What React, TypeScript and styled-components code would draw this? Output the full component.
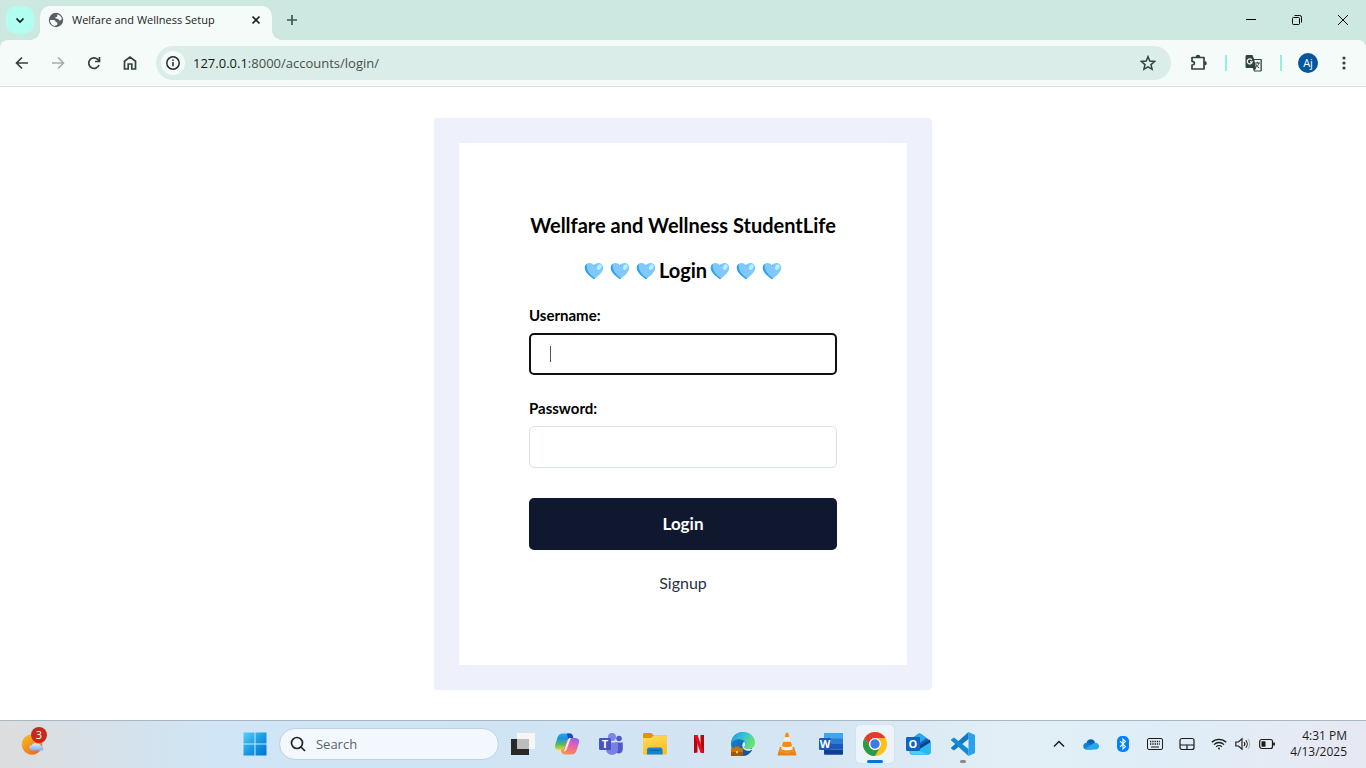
import React from "react";
import styled, { createGlobalStyle, css } from "styled-components";

const ui = `"Open Sans", "Noto Sans", sans-serif`;
const brand = `Lato, "Open Sans", sans-serif`;

const GlobalStyle = createGlobalStyle`
  *, *::before, *::after { box-sizing: border-box; }
  body { margin: 0; background: #fff; font-family: ${ui}; color: #000; }
  button, input { font: inherit; color: inherit; }
  button { border: 0; padding: 0; background: none; cursor: pointer; }
  svg { display: block; flex: none; }
`;

const Screen = styled.div`
  display: flex;
  flex-direction: column;
  min-height: 100vh;
`;

/* Browser frame */
const TabStrip = styled.div`
  display: flex;
  align-items: center;
  height: 40px;
  padding-left: 6px;
  background: #cce8e1;
`;

const TabSearch = styled.button`
  display: grid;
  place-items: center;
  width: 28px;
  height: 28px;
  margin-right: 6px;
  border-radius: 10px;
  background: #b2fff1;
`;

const Tab = styled.div`
  position: relative;
  display: flex;
  align-items: center;
  align-self: flex-end;
  width: 232px;
  height: 34px;
  padding: 0 8px 6px 8px;
  border-radius: 10px 10px 0 0;
  background: #f5fbf9;

  &::before,
  &::after {
    content: "";
    position: absolute;
    bottom: 0;
    width: 10px;
    height: 10px;
  }
  &::before {
    right: 100%;
    background: radial-gradient(circle at 0 0, transparent 10px, #f5fbf9 10px);
  }
  &::after {
    left: 100%;
    background: radial-gradient(circle at 100% 0, transparent 10px, #f5fbf9 10px);
  }
`;

const TabTitle = styled.span`
  flex: 1;
  margin-left: 8px;
  font-size: 11px;
  line-height: 16px;
  color: #1c2321;
  white-space: nowrap;
`;

const TabClose = styled.button`
  display: grid;
  place-items: center;
  width: 16px;
  height: 16px;
`;

const NewTab = styled.button`
  display: grid;
  place-items: center;
  width: 28px;
  height: 28px;
  margin-left: 6px;
`;

const WindowControls = styled.div`
  display: flex;
  margin-left: auto;
`;

const WindowButton = styled.button`
  display: grid;
  place-items: center;
  width: 46px;
  height: 40px;
`;

const ToolbarBack = styled.div`
  background: #cce8e1;
`;

const Toolbar = styled.div`
  display: flex;
  align-items: center;
  height: 47px;
  padding: 0 4px;
  border-bottom: 1px solid #d3e2de;
  border-radius: 8px 8px 0 0;
  background: #f5fbf9;
`;

const ToolButton = styled.button`
  display: grid;
  place-items: center;
  width: 36px;
  height: 34px;
`;

const AddressBar = styled.div`
  display: flex;
  align-items: center;
  flex: 1;
  height: 34px;
  margin: 0 9px 0 8px;
  padding: 0 15px 0 5px;
  border-radius: 17px;
  background: #daede8;
`;

const SiteInfo = styled.button`
  display: grid;
  place-items: center;
  width: 24px;
  height: 24px;
  margin-right: 8px;
  border-radius: 12px;
  background: #f5fbf9;
`;

const Address = styled.div`
  flex: 1;
  font-size: 13px;
  line-height: 20px;
  color: #47504d;
`;

const Host = styled.span`
  color: #141a18;
`;

const Divider = styled.span`
  width: 2px;
  height: 16px;
  margin: 0 8px 0 9px;
  background: #94f0e2;
`;

const Avatar = styled.span`
  display: grid;
  place-items: center;
  width: 20px;
  height: 20px;
  border-radius: 10px;
  background: #0257a0;
  color: #fff;
  font-size: 11px;
  line-height: 16px;
`;

/* Login page */
const Page = styled.main`
  display: flex;
  flex: 1;
  align-items: center;
  justify-content: center;
  padding: 24px;
  font-family: ${brand};
`;

const CardFrame = styled.div`
  width: 100%;
  max-width: 498px;
  padding: 25px;
  border-radius: 4px;
  background: #eef1fb;
`;

const Card = styled.form`
  display: flex;
  flex-direction: column;
  padding: 70px;
  background: #fff;
`;

const Heading = styled.h3`
  display: flex;
  align-items: center;
  justify-content: center;
  gap: 3px;
  margin: 0 0 20px;
  font-size: 20px;
  font-weight: 700;
  line-height: 25px;
  white-space: nowrap;
`;

const Hearts = styled.span`
  display: flex;
  gap: 6px;
`;

const Field = styled.div`
  position: relative;
  display: flex;
  flex-direction: column;
  gap: 8px;
  margin: 2px 0 21px;
`;

const Label = styled.label`
  font-size: 15px;
  font-weight: 700;
  line-height: 20px;
`;

const Input = styled.input<{ $active?: boolean }>`
  width: 100%;
  height: 42px;
  padding: 0 20px;
  border: 1px solid #d8dff3;
  border-radius: 5px;
  outline: none;
  background: #fff;
  caret-color: transparent;
  ${(p) => p.$active && css`border: 2px solid #101010;`}
`;

const Caret = styled.span`
  position: absolute;
  left: 21px;
  bottom: 13px;
  width: 1px;
  height: 16px;
  background: #4a5578;
`;

const Submit = styled.button`
  height: 52px;
  margin-top: 9px;
  border-radius: 5px;
  background: #10182f;
  color: #fff;
  font-size: 17px;
  font-weight: 700;
  line-height: 24px;
`;

const SignupLink = styled.a`
  align-self: center;
  margin-top: 20px;
  font-size: 16px;
  line-height: 25px;
  color: #2a3047;
  text-decoration: none;
`;

/* Taskbar */
const Taskbar = styled.footer`
  display: flex;
  align-items: center;
  height: 48px;
  padding: 0 19px 1px 11px;
  border-top: 1px solid #aab7c2;
  background: linear-gradient(90deg, #dcdddd 0, #d9dfe3 4%, #d0e5f5 15%, #cfe4f4 35%, #d5e5f3 60%, #e2eff6 74%, #deedf7 85%, #e5ebf5 94%, #e6e8f2 100%);
`;

const Spacer = styled.div<{ $grow: number }>`
  flex: ${(p) => p.$grow} 1 0;
`;

const AppButton = styled.button<{ $open?: boolean }>`
  position: relative;
  display: grid;
  place-items: center;
  width: 44px;
  height: 46px;
  ${(p) => p.$open && css`
    &::before {
      content: "";
      position: absolute;
      inset: 4px 3px;
      border-radius: 4px;
      background: #edf3fa;
      box-shadow: 0 0 1px #b3c3d0;
    }
  `}
  svg { position: relative; }
`;

const Running = styled.span<{ $focused?: boolean }>`
  position: absolute;
  bottom: 4px;
  width: ${(p) => (p.$focused ? 16 : 6)}px;
  height: 3px;
  border-radius: 2px;
  background: ${(p) => (p.$focused ? "#0078d4" : "#858a8f")};
`;

const Count = styled.span`
  position: absolute;
  top: 6px;
  right: 8px;
  width: 16px;
  height: 16px;
  border-radius: 8px;
  background: #c42b1c;
  color: #fff;
  font-size: 11px;
  line-height: 16px;
  text-align: center;
`;

const SearchBox = styled.label`
  display: flex;
  align-items: center;
  gap: 10px;
  width: 220px;
  height: 32px;
  margin: 0 2px;
  padding: 0 10px;
  border: 1px solid #bdd1e1;
  border-radius: 16px;
  background: #f2f8fd;
`;

const SearchInput = styled.input`
  flex: 1;
  min-width: 0;
  padding: 0;
  border: 0;
  outline: none;
  background: transparent;
  font-size: 13px;
  line-height: 20px;
  &::placeholder { color: #5d6266; opacity: 1; }
`;

const TrayButton = styled.button<{ $narrow?: boolean }>`
  display: grid;
  place-items: center;
  width: ${(p) => (p.$narrow ? 24 : 32)}px;
  height: 40px;
`;

const TrayGroup = styled.div`
  display: flex;
  margin-left: 4px;
`;

const Clock = styled.time`
  width: 68px;
  color: #1b1b1b;
  font-size: 12px;
  line-height: 16px;
  text-align: right;
  white-space: nowrap;
`;

type IconProps = { size?: number; color?: string; width?: number; children: React.ReactNode };
const Line = ({ size = 16, color = "#30443f", width = 1.7, children }: IconProps) => (
  <svg width={size} height={size} viewBox={`0 0 ${size} ${size}`} fill="none" stroke={color} strokeWidth={width}>
    {children}
  </svg>
);

const Heart = () => (
  <svg width="20" height="20" viewBox="0 -2 20 20">
    <path d="M10 17.3C7.3 15.1.8 11 .8 5.8.8 1 6.8-.7 10 3.2 13.2-.7 19.2 1 19.2 5.8c0 5.200-6.500 9.300-9.200 11.500Z" fill="#82c8ff" />
    <path d="M10 17.300C7.300 15.100.8 11 .8 5.800.8 4 1.600 2.600 2.800 1.700 1.900 8.500 6.300 13 11.300 16.300L10 17.300Z" fill="#2aa5ee" />
    <path d="M10 3.200 11 2.200 10.600 4.500Z" fill="#2aa5ee" />
    <ellipse cx="15.300" cy="5.100" rx="2" ry="3" transform="rotate(28 15.300 5.100)" fill="#b2f3ff" />
  </svg>
);

const Globe = () => (
  <svg width="16" height="16" viewBox="0 0 16 16">
    <circle cx="8" cy="8" r="7.200" fill="#5a5f63" />
    <path d="M2 8h3.500c1.500 0 2.300 1 2.300 2.300h1.500v2.200c-1.300 1.500-2.600 1.500-3.300 1.300C3.500 13 2 10.700 2 8Z" fill="#f5fbf9" />
    <path d="M9.500 2.200c2.200.6 3.700 2.200 4.300 4.300-.4 1.700-1.300 2.300-2.500 1.700-.6-.8-1.200-1.500-2.300-1.500-1.500 0-1.800-.8-1.500-1.700h1.500l.5-2.800Z" fill="#f5fbf9" />
  </svg>
);

const Translate = () => (
  <svg width="17" height="17" viewBox="0 0 17 17">
    <path d="M2 0h5.500L9 4h6.500c.8 0 1.300.5 1.300 1.300v9.900c0 .8-.5 1.300-1.300 1.300H9L7.800 13H2C1 13 .5 12.500.5 11.500v-10C.5.500 1 0 2 0Z" fill="#30443f" />
    <path d="M9.300 5h6.200v10.500H9.600l1.500-2.300Z" fill="#f5fbf9" />
    <path d="M6.800 5A2.500 2.500 0 1 0 7.200 6.900H5" fill="none" stroke="#f5fbf9" strokeWidth="1.200" />
    <path d="M9.800 8h5.200M12.300 6.800V8m1.600 0c-.5 2.200-1.800 3.700-3.300 4.700m.3-3.500c.7 1.500 1.900 3 3.300 3.900" fill="none" stroke="#30443f" strokeWidth="1" />
  </svg>
);

const Weather = () => (
  <svg width="26" height="26" viewBox="0 0 26 26">
    <defs>
      <linearGradient id="sun" x2="0.700" y2="1"><stop stopColor="#f8c12c" /><stop offset="1" stopColor="#ef6c13" /></linearGradient>
      <linearGradient id="cloud" x2="0" y2="1"><stop stopColor="#e1edff" /><stop offset="1" stopColor="#86aae8" /></linearGradient>
    </defs>
    <circle cx="12" cy="13.500" r="10.300" fill="url(#sun)" />
    <path d="M12 19.500a2.600 2.600 0 0 1-.3-5.200c.7-2.300 4-3.300 6.100-1.400 1.800-.3 3.200.8 3.200 2 3 .3 3 4.600.3 4.600Z" fill="url(#cloud)" />
  </svg>
);

const Windows = () => (
  <svg width="24" height="24" viewBox="0 0 24 24">
    <defs><linearGradient id="win" x2="1" y2="1" gradientUnits="userSpaceOnUse" gradientTransform="scale(23)"><stop stopColor="#5bd0fc" /><stop offset="0.550" stopColor="#169ae3" /><stop offset="1" stopColor="#0075d0" /></linearGradient></defs>
    <path d="M.5.500h11v11H.5ZM12.500.500h11v11h-11ZM.5 12.500h11v11H.5ZM12.500 12.500h11v11h-11Z" fill="url(#win)" />
  </svg>
);

const TaskView = () => (
  <svg width="24" height="24" viewBox="0 0 24 24">
    <path d="M0 7h18v16H0Z" fill="#292929" />
    <path d="M6 1h18v16H6Z" fill="#f6f6f6" />
    <path d="M6 7h12v10H6Z" fill="#bcbdbd" />
  </svg>
);

const Copilot = () => (
  <svg width="24" height="22" viewBox="0 0 24 22">
    <defs>
      <linearGradient id="cpa" x1="0.400" y1="0" x2="0.400" y2="1"><stop stopColor="#21a9f5" /><stop offset=".3" stopColor="#1b94dd" /><stop offset=".65" stopColor="#55b866" /><stop offset="1" stopColor="#f0dc20" /></linearGradient>
      <linearGradient id="cpb" x1="0.700" y1="0" x2="0.300" y2="1"><stop stopColor="#9c5cf0" /><stop offset=".5" stopColor="#f2669a" /><stop offset="1" stopColor="#fb9250" /></linearGradient>
    </defs>
    <path d="M7 5h13c3.800 0 4.700 2.300 3.700 5.500l-2 6.500c-1 3.300-2.600 4.500-5.200 4.500H9.400c-2 0-2.600-1.200-3.200-3.500L5.500 15Z" fill="url(#cpb)" />
    <path d="M7.500.5h8.100c-2.300 1-2.700 3.300-3.500 6L9.700 14c-.8 2.300-2 3-3.700 3H4.500C.5 17-.7 14.700.3 11.500l2-6.500C3.300 1.700 4.900.5 7.500.5Z" fill="url(#cpa)" />
    <path d="M12 .5h3.200c1.700 0 2.500.9 3.200 4.500h-2.200c-1.800 0-2.600.6-3.200 2.500Z" fill="#1d49c0" />
    <path d="M13 6.500 9.500 16.500c-.3.900-.9 1.500-1.600 2 2.300 0 3.400-.8 3.900-2.400L15 7c.3-1 .8-1.500 1.500-2-1.800 0-3 .3-3.500 1.500Z" fill="#edf3fc" />
  </svg>
);

const Badge = ({ x, y, s, fill, letter }: { x: number; y: number; s: number; fill: string; letter: string }) => (
  <>
    <rect x={x} y={y} width={s} height={s} rx="1.300" fill={fill} />
    <text x={x + s / 2} y={y + s / 2 + 4} textAnchor="middle" fill="#fff" fontFamily="Open Sans" fontWeight="700" fontSize="11">{letter}</text>
  </>
);

const Teams = () => (
  <svg width="26" height="24" viewBox="0 0 26 24">
    <circle cx="21" cy="6.500" r="2.800" fill="#5059c9" />
    <path d="M17 10.500h7.800v6.300c0 6-6.800 6-7.800 2Z" fill="#4f59cb" />
    <circle cx="14" cy="5" r="4" fill="#7c85ea" />
    <path d="M8 10.500h12v6.300c0 8-12 8-12 0Z" fill="#7780e4" />
    <Badge x={1} y={6} s={12} fill="#4b53bc" letter="T" />
  </svg>
);

const Folder = () => (
  <svg width="24" height="24" viewBox="0 0 24 24">
    <defs><linearGradient id="fold" y2="1" x2=".3"><stop stopColor="#ffdc67" /><stop offset="1" stopColor="#ffbf18" /></linearGradient></defs>
    <path d="M0 2.500C0 1.500.5 1 1.500 1H8l3 2.300h11.500c1 0 1.500.5 1.500 1.500v5H0Z" fill="#dd9800" />
    <path d="M0 6h8l3-2.700h11.500c1 0 1.500.5 1.500 1.500v16.500c0 .8-.5 1.200-1.200 1.200H1.200C.5 22.500 0 22 0 21.300Z" fill="url(#fold)" />
    <path d="M4 22.500V18c0-1.500.8-2.500 2.300-2.500h11c1.500 0 2.300 1 2.300 2.500v4.500Z" fill="#1284d7" />
    <path d="M7 18.300h10" stroke="#075ca6" />
  </svg>
);

const Netflix = () => (
  <svg width="10" height="18" viewBox="0 0 10 18">
    <path d="M0 0h3.500v17.500L0 18ZM6.500 0H10v18l-3.500-.5Z" fill="#b40610" />
    <path d="M0 0h3.500L10 18l-3.500-.5Z" fill="#e80c18" />
  </svg>
);

const Edge = () => (
  <svg width="26" height="26" viewBox="0 0 26 26">
    <defs>
      <linearGradient id="edg" x2="1" y2=".4"><stop stopColor="#1f9be6" /><stop offset=".5" stopColor="#33bfdc" /><stop offset="1" stopColor="#67e36f" /></linearGradient>
      <linearGradient id="edb" x2="1" y2="1"><stop stopColor="#1b8fd8" /><stop offset="1" stopColor="#0b4a90" /></linearGradient>
    </defs>
    <path d="M1 13C1 6 6 1 13 1s9 9 9 18.500c-2.200 3.500-5.500 5.500-9 5.500C6 25 1 20 1 13Z" fill="url(#edb)" />
    <path d="M1 12C2 5 7 1 13 1c7 0 12 4.700 12 10.500 0 4-2.700 6.500-6.500 6.500-2.500 0-4.300-.8-4.300-2 1.700-1.800 1.700-4.200 0-5.900C10.500 7 4 7.500 1 12Z" fill="url(#edg)" />
    <path d="M14.200 10.500c-3 2-2.500 7.500 2 9 2.800.9 5.300 0 7.300-2.300-1.300.6-3.200 1-5 .8-2.500 0-4.300-.8-4.300-2 1.500-1.600 1.700-3.700 0-5.500Z" fill="#dcecf7" />
    <path d="M4.500 17v-1.500h5V17H13v8H1v-8Z" fill="#c9730d" />
    <path d="M1 21h12v4H1Z" fill="#a35405" />
    <path d="M6 20h2v2.200H6Z" fill="#ffd153" />
  </svg>
);

const Vlc = () => (
  <svg width="22" height="24" viewBox="0 0 22 24">
    <path d="m4 15-2.300 7.200c-.3.800.1 1.300.8 1.300h17c.7 0 1.100-.5.800-1.300L18 15Z" fill="#ed8112" />
    <path d="M10 .8h2L17.500 19c-2 1.800-11 1.800-13 0Z" fill="#f0f0ee" />
    <path d="m8.700 4.800 1.200-4h2.200l1.200 4c-1.200.6-3.500.6-4.600 0ZM7.200 9.700h7.600l1.300 4.400c-2.200 1.300-8 1.300-10.200 0ZM4.500 19l.6-2c2.500 1.800 9.300 1.800 11.800 0l.6 2c-2.500 2-10.500 2-13 0Z" fill="#f48b14" />
  </svg>
);

const Word = () => (
  <svg width="24" height="24" viewBox="0 0 24 24">
    <path d="M5 1h19v6H5Z" fill="#41a5ee" /><path d="M5 6.500h19V12H5Z" fill="#2b7cd3" />
    <path d="M5 12h19v5.500H5Z" fill="#185abd" /><path d="M5 17.500h19V22a.8.8 0 0 1-.8.800H5.800A.8.800 0 0 1 5 22Z" fill="#103f91" />
    <Badge x={0} y={6} s={12} fill="#185abd" letter="W" />
  </svg>
);

const Chrome = () => (
  <svg width="24" height="24" viewBox="0 0 24 24">
    <circle cx="12" cy="12" r="12" fill="#fbc116" />
    <path d="M1.600 6A12 12 0 0 1 22.400 6H12a6 6 0 0 0-5.200 9Z" fill="#e33b2e" />
    <path d="M1.600 6A12 12 0 0 0 12 24l5.200-9A6 6 0 0 1 6.800 15Z" fill="#269d4b" />
    <circle cx="12" cy="12" r="6" fill="#fff" /><circle cx="12" cy="12" r="4.700" fill="#397be9" />
  </svg>
);

const Outlook = () => (
  <svg width="25" height="24" viewBox="0 0 25 24">
    <path d="m4 8 8-6c1-.7 1.900-.7 3 0l9.500 7v11c0 1.700-.8 2.500-2.500 2.500H6c-1.500 0-2.300-.8-2.300-2.500Z" fill="#0c62c3" />
    <path d="m6 6.500 6-4.600c1-.7 1.900-.7 3 0l5.500 4.100L11 13Z" fill="#2ba8ec" /><path d="m13 14 11-6.500v6L14 20Z" fill="#123e87" />
    <path d="m5 22.300 19.500-12V20c0 1.700-.8 2.500-2.500 2.500H6Z" fill="#27b9ef" />
    <path d="M4 15v5c0 1.700.8 2.500 2.500 2.500H22Z" fill="#47cef4" />
    <Badge x={0} y={5} s={14} fill="#0f65bd" letter="O" />
  </svg>
);

const VsCode = () => (
  <svg width="24" height="24" viewBox="0 0 24 24">
    <path d="M17.500 0 24 3v18l-6.500 3Z" fill="#27a3ed" />
    <path d="M17.500 0v7L3 18.500.3 16.700c-.4-.4-.4-.9 0-1.300L17.500 0Z" fill="#1678bd" />
    <path d="M17.500 24v-7L3 5.500.3 7.300c-.4.400-.4.900 0 1.300L17.500 24Z" fill="#1489d4" />
  </svg>
);

const apps = [
  { name: "Task view", icon: <TaskView /> },
  { name: "Copilot", icon: <Copilot /> },
  { name: "Teams", icon: <Teams /> },
  { name: "File Explorer", icon: <Folder /> },
  { name: "Netflix", icon: <Netflix /> },
  { name: "Edge", icon: <Edge /> },
  { name: "VLC", icon: <Vlc /> },
  { name: "Word", icon: <Word /> },
  { name: "Chrome", icon: <Chrome />, state: "focused" },
  { name: "Outlook", icon: <Outlook /> },
  { name: "Visual Studio Code", icon: <VsCode />, state: "running" },
];

const HeartRow = () => (
  <Hearts aria-hidden="true"><Heart /><Heart /><Heart /></Hearts>
);

export default function App() {
  return (
    <Screen>
      <GlobalStyle />
      <header>
        <TabStrip>
          <TabSearch aria-label="Search tabs"><Line size={10} color="#0c1412"><path d="m1.500 3.500 3.500 3.500 3.500-3.500" /></Line></TabSearch>
          <Tab>
            <Globe />
            <TabTitle>Welfare and Wellness Setup</TabTitle>
            <TabClose aria-label="Close tab"><Line size={10} color="#1c2321"><path d="m1.500 1.500 7 7M8.500 1.500l-7 7" /></Line></TabClose>
          </Tab>
          <NewTab aria-label="New tab"><Line size={12} color="#3d5650"><path d="M6 1v10M1 6h10" /></Line></NewTab>
          <WindowControls>
            <WindowButton aria-label="Minimize"><Line size={10} color="#000" width={1}><path d="M0 4.500h10" /></Line></WindowButton>
            <WindowButton aria-label="Restore"><Line size={10} color="#000" width={1}><rect x="0.500" y="2.500" width="7" height="7" rx="1" /><path d="M2.500.500h5.200a1.800 1.800 0 0 1 1.800 1.800v5.200" /></Line></WindowButton>
            <WindowButton aria-label="Close window"><Line size={10} color="#000" width={1}><path d="m0 0 10 10M10 0 0 10" /></Line></WindowButton>
          </WindowControls>
        </TabStrip>
        <ToolbarBack>
          <Toolbar>
            <ToolButton aria-label="Back"><Line><path d="M14 8H3M8 2.500 2.500 8 8 13.500" /></Line></ToolButton>
            <ToolButton aria-label="Forward"><Line color="#a5aeab"><path d="M2 8h11M8 2.500 13.500 8 8 13.500" /></Line></ToolButton>
            <ToolButton aria-label="Reload"><Line><path d="M13 10a5.300 5.300 0 1 1-1.300-5.700L13.500 6M13.500 2v4.500H9" /></Line></ToolButton>
            <ToolButton aria-label="Home"><Line><path d="M2.500 6.200 8 2l5.500 4.200V14h-3.700V9H6.200v5H2.500Z" /></Line></ToolButton>
            <AddressBar>
              <SiteInfo aria-label="Site information"><Line color="#202b28" width={1.5}><circle cx="8" cy="8" r="6.200" /><path d="M8 7v4.300M8 4.500v1.500" /></Line></SiteInfo>
              <Address><Host>127.0.0.1</Host>:8000/accounts/login/</Address>
              <TabClose aria-label="Bookmark"><Line color="#30443f" width={1.5}><path d="m8 1.700 1.800 4.400 4.800.4-3.600 3.100 1.100 4.700L8 11.800l-4.100 2.500L5 9.600 1.400 6.500l4.800-.4Z" /></Line></TabClose>
            </AddressBar>
            <ToolButton aria-label="Extensions"><Line size={18}><path d="M3 3.500h12v11.500H3v-4c3.200-.3 3.200-3.300 0-3.600Z" strokeLinejoin="round" /><path d="M6.700 3a2.300 2.300 0 0 1 4.600 0M15.500 7a2.300 2.300 0 0 1 0 4.600" fill="#30443f" stroke="none" /></Line></ToolButton>
            <Divider />
            <ToolButton aria-label="Translate"><Translate /></ToolButton>
            <Divider />
            <ToolButton aria-label="Profile"><Avatar>Aj</Avatar></ToolButton>
            <ToolButton aria-label="Menu"><svg width="16" height="16" viewBox="0 0 16 16" fill="#30443f"><circle cx="8" cy="3" r="1.600" /><circle cx="8" cy="8" r="1.600" /><circle cx="8" cy="13" r="1.600" /></svg></ToolButton>
          </Toolbar>
        </ToolbarBack>
      </header>

      <Page>
        <CardFrame>
          <Card onSubmit={(e) => e.preventDefault()}>
            <Heading>Wellfare and Wellness StudentLife</Heading>
            <Heading><HeartRow />Login<HeartRow /></Heading>
            <Field>
              <Label htmlFor="username">Username:</Label>
              <Input id="username" type="text" $active />
              <Caret />
            </Field>
            <Field>
              <Label htmlFor="password">Password:</Label>
              <Input id="password" type="password" />
            </Field>
            <Submit type="submit">Login</Submit>
            <SignupLink href="#signup">Signup</SignupLink>
          </Card>
        </CardFrame>
      </Page>

      <Taskbar>
        <AppButton aria-label="Weather"><Weather /><Count>3</Count></AppButton>
        <Spacer $grow={46} />
        <AppButton aria-label="Start"><Windows /></AppButton>
        <SearchBox>
          <Line color="#222"><circle cx="7" cy="7" r="5.500" /><path d="m11 11 4 4" /></Line>
          <SearchInput aria-label="Search" placeholder="Search" />
        </SearchBox>
        {apps.map((app) => (
          <AppButton key={app.name} aria-label={app.name} $open={app.state === "focused"}>
            {app.icon}
            {app.state && <Running $focused={app.state === "focused"} />}
          </AppButton>
        ))}
        <Spacer $grow={15} />
        <TrayButton aria-label="Show hidden icons"><Line size={12} color="#1b1b1b" width={1.5}><path d="m1 8.500 5-5 5 5" /></Line></TrayButton>
        <TrayButton aria-label="OneDrive">
          <svg width="16" height="12" viewBox="0 0 16 12"><path d="M3.500 4.500C5 .3 10.500 0 12 4.300L9 9Z" fill="#0a5fb5" /><path d="M3.500 11.500C-.8 11.500-.8 5 3.500 4.800c1.200-.3 2.500.1 3.500.9L10 11.500Z" fill="#1380d2" /><path d="m2 11 8-5.500c3-2 6-.2 6 2.800 0 2-1.300 3.200-3.200 3.200H3.500Z" fill="#28a8ea" /></svg>
        </TrayButton>
        <TrayButton aria-label="Bluetooth">
          <svg width="12" height="16" viewBox="0 0 12 16"><rect width="12" height="16" rx="5" fill="#0082fc" /><path d="m3 5.200 5.500 5.300L6 13V3l2.500 2.500L3 10.800" fill="none" stroke="#fff" strokeWidth="1.100" /></svg>
        </TrayButton>
        <TrayButton aria-label="Keyboard"><Line color="#1b1b1b" width={1}><rect x="0.500" y="2.500" width="15" height="11" rx="1.500" /><path d="M3 5.500h10M3 8h10" strokeDasharray="1.300 1" strokeWidth="1.300" /><path d="M4 11h8" /></Line></TrayButton>
        <TrayButton aria-label="Touchpad"><Line color="#1b1b1b" width={1.2}><rect x="1" y="2.500" width="14" height="11" rx="2" /><path d="M1 9h14M8 9v4.500" /></Line></TrayButton>
        <TrayGroup>
          <TrayButton $narrow aria-label="Wi-Fi"><Line color="#1b1b1b" width={1.3}><path d="M.8 6.300a10.300 10.300 0 0 1 14.400 0M3 8.600a7 7 0 0 1 10 0M5.200 10.700a4 4 0 0 1 5.600 0" /><circle cx="8" cy="12.600" r="1" fill="#1b1b1b" stroke="none" /></Line></TrayButton>
          <TrayButton $narrow aria-label="Volume"><Line color="#1b1b1b" width={1.1}><path d="M.8 6h2.700L7 2.800v10.400L3.500 10H.8ZM9 6a3 3 0 0 1 0 4M10.800 4.300a5.500 5.500 0 0 1 0 7.400" /><path d="M12.800 2.800a8 8 0 0 1 0 10.400" stroke="#b1b8bd" /></Line></TrayButton>
          <TrayButton $narrow aria-label="Battery"><Line color="#1b1b1b" width={1.2}><rect x="0.700" y="3.500" width="12.800" height="9" rx="2" /><path d="M2.500 5.300h4v5.400h-4Z" fill="#1b1b1b" stroke="none" /><path d="M15 6.500v3" strokeWidth="1.800" /></Line></TrayButton>
        </TrayGroup>
        <Clock>4:31 PM<br />4/13/2025</Clock>
      </Taskbar>
    </Screen>
  );
}
